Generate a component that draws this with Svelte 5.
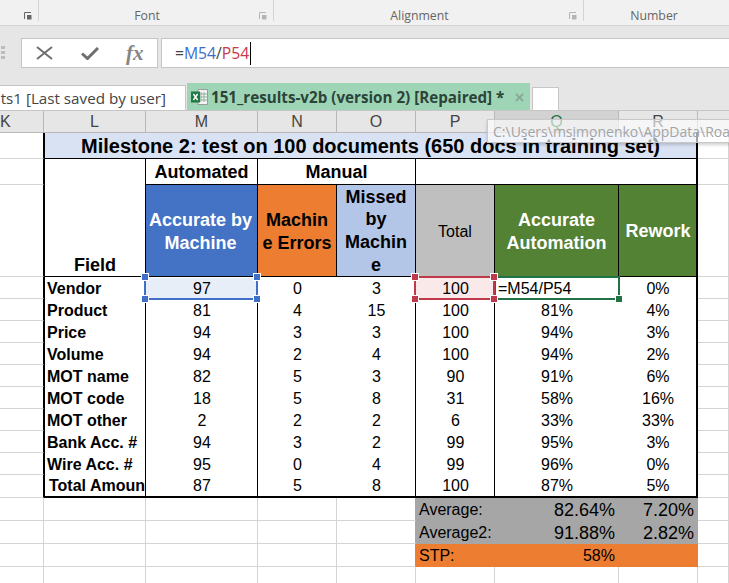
<script lang="ts">
	const columns = ['K', 'L', 'M', 'N', 'O', 'P', 'Q', 'R', ''];

	const fields = [
		{ name: 'Vendor', auto: 97, errors: 0, missed: 3, total: 100, accurate: '', rework: '0%' },
		{ name: 'Product', auto: 81, errors: 4, missed: 15, total: 100, accurate: '81%', rework: '4%' },
		{ name: 'Price', auto: 94, errors: 3, missed: 3, total: 100, accurate: '94%', rework: '3%' },
		{ name: 'Volume', auto: 94, errors: 2, missed: 4, total: 100, accurate: '94%', rework: '2%' },
		{ name: 'MOT name', auto: 82, errors: 5, missed: 3, total: 90, accurate: '91%', rework: '6%' },
		{ name: 'MOT code', auto: 18, errors: 5, missed: 8, total: 31, accurate: '58%', rework: '16%' },
		{ name: 'MOT other', auto: 2, errors: 2, missed: 2, total: 6, accurate: '33%', rework: '33%' },
		{ name: 'Bank Acc. #', auto: 94, errors: 3, missed: 2, total: 99, accurate: '95%', rework: '3%' },
		{ name: 'Wire Acc. #', auto: 95, errors: 0, missed: 4, total: 99, accurate: '96%', rework: '0%' },
		{ name: 'Total Amount', auto: 87, errors: 5, missed: 8, total: 100, accurate: '87%', rework: '5%' }
	];

	const summary = [
		{ label: 'Average:', q: '82.64%', r: '7.20%', tone: 'grey' },
		{ label: 'Average2:', q: '91.88%', r: '2.82%', tone: 'grey' },
		{ label: 'STP:', q: '58%', r: '', tone: 'orange' }
	];
</script>

{#snippet launcher(dim: boolean)}
	<svg class="launcher" class:dim width="8" height="8" viewBox="0 0 8 8">
		<path d="M0.5 7V0.5H7" fill="none" stroke="currentColor" stroke-width="1" />
		<path d="M3 3L7.5 3V7.5H3Z" fill="currentColor" />
	</svg>
{/snippet}

<div class="window">
	<div class="ribbon">
		<div class="group first">{@render launcher(false)}</div>
		<div class="group font"><span>Font</span>{@render launcher(true)}</div>
		<div class="group align"><span>Alignment</span>{@render launcher(true)}</div>
		<div class="group number"><span>Number</span></div>
	</div>

	<div class="formula-bar">
		<div class="grip"><i></i><i></i><i></i></div>
		<div class="buttons">
			<svg width="17" height="14" viewBox="0 0 17 14">
				<path d="M1 1L16 13M16 1L1 13" fill="none" stroke="#6e6e6e" stroke-width="2" />
			</svg>
			<svg width="18" height="13" viewBox="0 0 18 13">
				<path d="M1 6.5L6.5 11.5L17 1" fill="none" stroke="#6e6e6e" stroke-width="3" />
			</svg>
			<span class="fx">fx</span>
		</div>
		<div class="input">
			<span>=</span><span class="ref-blue">M54</span><span>/</span><span class="ref-red">P54</span><span class="caret"></span>
		</div>
	</div>

	<div class="tabs">
		<div class="tab plain">ts1 [Last saved by user]</div>
		<div class="tab active">
			<svg width="17" height="16" viewBox="0 0 17 16">
				<path d="M7 0.5H16.5V15.5H7Z" fill="#f4f4f4" stroke="#9a9a9a" />
				<path d="M10 3V13M13 3V13M8 5H16M8 8H16M8 11H16" stroke="#8fb39f" stroke-width="1" />
				<rect x="0" y="2.5" width="9" height="11" fill="#1f7a45" />
				<path d="M2.4 5L6.6 11M6.6 5L2.4 11" stroke="#fff" stroke-width="1.4" />
			</svg>
			<span class="tab-title">151_results-v2b (version 2) [Repaired] *</span>
			<svg class="close" width="9" height="9" viewBox="0 0 9 9">
				<path d="M1 1L8 8M8 1L1 8" stroke="#8aa99a" stroke-width="2" />
			</svg>
		</div>
		<div class="tab new"></div>
	</div>

	<div class="col-heads">
		{#each columns as col}
			<div class="col-head" class:selected={col === 'Q'}>{col}</div>
		{/each}
	</div>

	<div class="sheet">
		<!-- title row -->
		<div class="cell edge"></div>
		<div class="cell title">Milestone 2: test on 100 documents (650 docs in training set)</div>
		<div class="cell"></div>

		<!-- group headings -->
		<div class="cell edge"></div>
		<div class="cell field-head">Field</div>
		<div class="cell head-light line">Automated</div>
		<div class="cell head-light line span-manual">Manual</div>
		<div class="cell span-rest line"></div>
		<div class="cell"></div>

		<!-- column headings -->
		<div class="cell edge"></div>
		<div class="cell head-fill two blue line">Accurate by<br />Machine</div>
		<div class="cell head-fill two orange line dark">Machin<br />e Errors</div>
		<div class="cell head-fill pale line dark">Missed<br />by<br />Machin<br />e</div>
		<div class="cell head-fill silver line total-head">Total</div>
		<div class="cell head-fill two green line">Accurate<br />Automation</div>
		<div class="cell head-fill green line rework">Rework</div>
		<div class="cell"></div>

		{#each fields as row, i}
			{@const last = i === fields.length - 1}
			<div class="cell edge"></div>
			<div class="cell name" class:last class:indent={last}><span>{row.name}</span></div>
			<div class="cell num ruled" class:last class:sel-blue={i === 0}>
				{row.auto}
				{#if i === 0}
					<div class="range blue-range">
						<i class="dot tl"></i><i class="dot tr"></i><i class="dot bl"></i><i class="dot br"></i>
					</div>
				{/if}
			</div>
			<div class="cell num" class:last>{row.errors}</div>
			<div class="cell num ruled" class:last>{row.missed}</div>
			<div class="cell num ruled" class:last class:sel-red={i === 0}>
				{row.total}
				{#if i === 0}
					<div class="range red-range">
						<i class="dot tl"></i><i class="dot tr"></i><i class="dot bl"></i><i class="dot br"></i>
					</div>
				{/if}
			</div>
			<div class="cell num" class:last>
				{#if i === 0}
					<div class="range green-range">=M54/P54<i class="dot br"></i></div>
				{:else}
					{row.accurate}
				{/if}
			</div>
			<div class="cell num end" class:last>{row.rework}</div>
			<div class="cell"></div>
		{/each}

		{#each summary as row}
			<div class="cell"></div>
			<div class="cell"></div>
			<div class="cell"></div>
			<div class="cell"></div>
			<div class="cell {row.tone}-edge"></div>
			<div class="cell band {row.tone} label">{row.label}</div>
			<div class="cell band {row.tone} value" class:big={row.tone === 'grey'}>{row.q}</div>
			<div class="cell band {row.tone} value big">{row.r}</div>
			<div class="cell"></div>
		{/each}

		{#each columns as _}
			<div class="cell open"></div>
		{/each}
	</div>

	<div class="tooltip">C:\Users\msimonenko\AppData\Roaming\Microsoft\Excel</div>
</div>

<style>
	:global(body) {
		margin: 0;
		background: #fff;
	}

	.window {
		position: relative;
		width: 729px;
		height: 583px;
		overflow: hidden;
		display: flex;
		flex-direction: column;
		font-family: 'Liberation Sans', Arial, sans-serif;
		color: #000;
	}

	/* ribbon */
	.ribbon {
		height: 26px;
		box-sizing: border-box;
		display: flex;
		background: #f1f1f1;
		border-bottom: 1px solid #d2d2d2;
		font-family: 'Open Sans', sans-serif;
		font-size: 12.3px;
		color: #666;
	}

	.group {
		position: relative;
		height: 21px;
		box-sizing: border-box;
		border-right: 1px solid #d4d4d4;
		display: flex;
		align-items: center;
		justify-content: center;
		padding-top: 9px;
	}

	.group.first { width: 39px; }
	.group.font { width: 235px; padding-right: 18px; }
	.group.align { width: 310px; padding-right: 18px; }
	.group.number { flex: 1; border-right: none; padding-right: 5px; }

	.launcher {
		position: absolute;
		right: 6px;
		top: 12px;
		color: #666;
	}

	.launcher.dim {
		color: #b4b4b4;
	}

	/* formula bar */
	.formula-bar {
		height: 42px;
		box-sizing: border-box;
		padding-top: 12px;
		display: flex;
		background: #e6e6e6;
	}

	.grip {
		width: 21px;
		padding: 8px 0 0 1px;
		box-sizing: border-box;
	}

	.grip i {
		display: block;
		width: 4px;
		height: 3px;
		margin-bottom: 2px;
		background: #bcbcbc;
	}

	.buttons {
		width: 137px;
		height: 30px;
		box-sizing: border-box;
		background: #fff;
		border: 1px solid #c6c6c6;
		display: flex;
		align-items: center;
		padding-left: 14px;
		gap: 28px;
	}

	.fx {
		font-family: 'Liberation Serif', serif;
		font-style: italic;
		font-weight: bold;
		font-size: 21px;
		color: #858585;
		margin-left: -1px;
	}

	.input {
		flex: 1;
		height: 30px;
		margin-left: 3px;
		box-sizing: border-box;
		background: #fff;
		border: 1px solid #c6c6c6;
		border-right: none;
		display: flex;
		align-items: center;
		padding-left: 13px;
		font-family: 'Open Sans', sans-serif;
		font-size: 15.7px;
		color: #444;
	}

	.ref-blue { color: #3c6fd0; }
	.ref-red { color: #c8394b; }

	.caret {
		width: 1px;
		height: 23px;
		margin-left: 1px;
		background: #000;
	}

	/* workbook tabs */
	.tabs {
		height: 42px;
		box-sizing: border-box;
		background: #e6e6e6;
		display: flex;
		align-items: flex-end;
		font-family: 'Open Sans', sans-serif;
	}

	.tab {
		box-sizing: border-box;
		display: flex;
		align-items: center;
	}

	.tab.plain {
		width: 186px;
		height: 25px;
		background: #fff;
		border: 1px solid #c6c6c6;
		border-left: none;
		border-bottom: none;
		justify-content: flex-end;
		padding-right: 19px;
		font-size: 15.2px;
		color: #444;
		white-space: nowrap;
	}

	.tab.active {
		width: 343px;
		height: 27px;
		margin-left: 1px;
		padding-top: 1px;
		background: #9fd5b7;
		padding-left: 4px;
		gap: 3px;
	}

	.tab-title {
		font-size: 15.2px;
		font-weight: bold;
		color: #2c4438;
		white-space: nowrap;
	}

	.close {
		margin-left: 8px;
	}

	.tab.new {
		width: 27px;
		height: 23px;
		margin-left: 2px;
		background: #fff;
		border: 1px solid #c6c6c6;
		border-bottom: none;
	}

	/* column letters */
	.col-heads {
		height: 23px;
		box-sizing: border-box;
		display: grid;
		grid-template-columns: 44px 102px 112px 79px 79px 79px 124px 79px 1fr;
		background: #e6e6e6;
		border-top: 1px solid #c6c6c6;
		border-bottom: 1px solid #b8b8b8;
	}

	.col-head {
		box-sizing: border-box;
		padding-top: 1px;
		border-right: 1px solid #b8b8b8;
		display: flex;
		align-items: center;
		justify-content: center;
		font-size: 16px;
		color: #444;
	}

	.col-head:first-child {
		justify-content: flex-start;
	}

	.col-head:last-child {
		border-right: none;
	}

	.col-head.selected {
		background: #d2d2d2;
		color: #217346;
	}

	/* sheet */
	.sheet {
		flex: 1;
		display: grid;
		grid-template-columns: 44px 102px 112px 79px 79px 79px 124px 79px 1fr;
		grid-template-rows: 26px 26px 92px repeat(9, 22px) 23px 23px 23px 23px 1fr;
		font-size: 16px;
		line-height: 1;
	}

	.cell {
		position: relative;
		box-sizing: border-box;
		min-width: 0;
		border-right: 1px solid #d4d4d4;
		border-bottom: 1px solid #d4d4d4;
		display: flex;
		align-items: center;
		justify-content: center;
	}

	.edge {
		border-right-color: #000;
	}

	.title {
		grid-column: span 7;
		background: #d9e2f3;
		border-left: 1px solid #000;
		border-right: 2px solid #000;
		border-bottom: 1px solid #000;
		font-size: 20px;
		font-weight: bold;
		white-space: nowrap;
	}

	.field-head {
		grid-row: span 2;
		border-left: 1px solid #000;
		border-right: 1px solid #000;
		border-bottom: 1px solid #000;
		align-items: flex-end;
		padding-bottom: 2px;
		font-size: 18px;
		font-weight: bold;
	}

	.line {
		border-right: 1px solid #000;
		border-bottom: 1px solid #000;
	}

	.head-light {
		background: #fff;
		font-size: 18px;
		font-weight: bold;
	}

	.span-manual {
		grid-column: span 2;
	}

	.span-rest {
		grid-column: span 3;
		background: #fff;
		border-right: 2px solid #000;
	}

	.head-fill {
		padding-top: 1px;
		text-align: center;
		font-size: 18px;
		font-weight: bold;
		line-height: 22.7px;
		color: #fff;
	}

	.head-fill.two { padding-top: 3px; }
	.head-fill.dark { color: #000; }
	.blue { background: #4472c4; padding-right: 2px; }
	.orange { background: #ed7d31; }
	.pale { background: #b4c6e7; }
	.silver { background: #bfbfbf; }
	.green { background: #548235; }

	.rework {
		border-right-width: 2px;
		padding-left: 1px;
	}

	.total-head {
		padding-top: 3px;
		font-size: 16px;
		font-weight: normal;
		color: #000;
	}

	.name {
		justify-content: flex-start;
		padding: 1px 0 0 2px;
		border-left: 1px solid #000;
		border-right: 1px solid #000;
		border-bottom: none;
		font-weight: bold;
		overflow: hidden;
		white-space: nowrap;
	}

	.name.indent {
		padding-left: 4px;
	}

	.num {
		padding-top: 1px;
		border-right: none;
		border-bottom: none;
		background: #fff;
	}

	.ruled {
		padding-left: 1px;
		border-right: 1px solid #000;
	}

	.end {
		padding-left: 1px;
		border-right: 2px solid #000;
	}

	.cell.last {
		border-bottom: 2px solid #000;
	}

	.sel-blue { background: #e8eef8; }
	.sel-red { background: #f9e9e9; }

	/* formula reference ranges */
	.range {
		position: absolute;
		box-sizing: border-box;
		z-index: 2;
	}

	.blue-range {
		left: -2px;
		right: -1px;
		top: 0;
		bottom: -1px;
		border: 2px solid #3f6fc6;
		border-top: 1px solid #fff;
		--dot: #3f6fc6;
	}

	.red-range {
		z-index: 3;
		left: -2px;
		right: -1px;
		top: -1px;
		bottom: -1px;
		border: 2px solid #c0394a;
		--dot: #c0394a;
	}

	.green-range {
		left: -1px;
		right: -1px;
		top: -1px;
		bottom: -1px;
		border: 2px solid #217346;
		background: #fff;
		display: flex;
		align-items: center;
		padding: 1px 0 0 2px;
		--dot: #217346;
	}

	.dot {
		position: absolute;
		width: 6px;
		height: 6px;
		background: var(--dot);
		outline: 1px solid #fff;
	}

	.tl { left: -4px; top: -4px; }
	.tr { right: -4px; top: -4px; }
	.bl { left: -4px; bottom: -4px; }
	.br { right: -4px; bottom: -4px; }

	.band {
		border: none;
		padding-top: 1px;
	}

	.band.grey { background: #a6a6a6; }
	.band.orange { background: #ed7d31; }
	.grey-edge { border-right-color: #a6a6a6; }
	.orange-edge { border-right-color: #ed7d31; }

	.label {
		justify-content: flex-start;
		padding-left: 3px;
	}

	.value {
		justify-content: flex-end;
		padding-right: 4px;
	}

	.value.big {
		font-size: 18px;
	}

	.open {
		border-bottom: none;
	}

	/* path tooltip over the sheet */
	.tooltip {
		position: absolute;
		left: 487px;
		top: 119px;
		right: -2px;
		height: 24px;
		box-sizing: border-box;
		padding: 2px 0 0 5px;
		background: rgba(255, 255, 255, 0.62);
		border: 1px solid #c8c8c8;
		box-shadow: 0 2px 3px rgba(0, 0, 0, 0.18);
		font-family: 'Open Sans', sans-serif;
		font-size: 14px;
		color: #a4a4a4;
		white-space: nowrap;
		overflow: hidden;
	}
</style>
